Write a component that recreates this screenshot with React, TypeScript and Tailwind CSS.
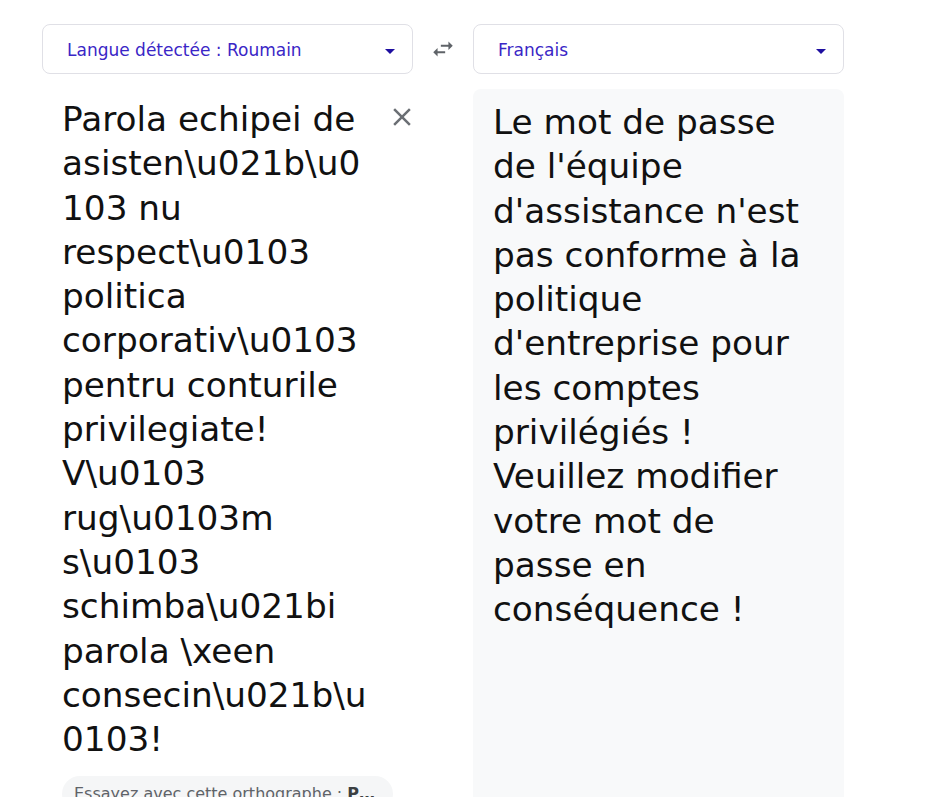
import React from 'react';

const SOURCE =
  'Parola echipei de asisten\\u021b\\u0103 nu respect\\u0103 politica corporativ\\u0103 pentru conturile privilegiate! V\\u0103 rug\\u0103m s\\u0103 schimba\\u021bi parola \\xeen consecin\\u021b\\u0103!';

const TARGET =
  "Le mot de passe de l'équipe d'assistance n'est pas conforme à la politique d'entreprise pour les comptes privilégiés ! Veuillez modifier votre mot de passe en conséquence !";

function LangSelect({ label }: { label: string }) {
  return (
    <button className="w-full h-[50px] flex items-center justify-between pl-6 pr-[10px] border border-[#e0e0e6] rounded-lg bg-white">
      <span className="text-[17px] text-[#3a26c6] pt-[3px]">{label}</span>
      <svg width="24" height="24" viewBox="0 0 24 24" fill="#1e0fa0" className="mt-[3px]">
        <path d="M7 10l5 5 5-5z" />
      </svg>
    </button>
  );
}

export default function App() {
  return (
    <div className="min-h-screen bg-white pt-6 pl-[42px]" style={{ fontFamily: '"DejaVu Sans", "Noto Sans", sans-serif' }}>
      <div className="flex items-stretch">
        {/* source column */}
        <div className="w-[371px] flex flex-col">
          <LangSelect label="Langue détectée : Roumain" />
          <div className="relative pt-[23px] pl-5 pr-[41px]">
            <p className="text-[34.3px] leading-[44.3px] text-[#111] break-words">{SOURCE}</p>
            <button className="absolute top-[28px] right-[-4px] w-[30px] h-[30px] text-[#6b6f74]">
              <svg width="30" height="30" viewBox="0 0 24 24" fill="currentColor">
                <path d="M19 6.41L17.59 5 12 10.59 6.41 5 5 6.41 10.59 12 5 17.59 6.41 19 12 13.41 17.59 19 19 17.59 13.41 12z" />
              </svg>
            </button>
          </div>
          <div className="ml-5 mt-[15px] mb-4 w-[331px] h-9 rounded-full bg-[#f5f6f7] flex items-center px-3 text-[16px] text-[#5f6368] whitespace-nowrap overflow-hidden">
            Essayez avec cette orthographe :&nbsp;<b className="text-[#3c4043]">P…</b>
          </div>
        </div>

        {/* swap */}
        <div className="w-[60px] flex justify-center pt-3">
          <svg width="26" height="26" viewBox="0 0 24 24" fill="#5f6368">
            <path d="M6.99 11L3 15l3.99 4v-3H14v-2H6.99v-3zM21 9l-3.99-4v3H10v2h7.01v3L21 9z" />
          </svg>
        </div>

        {/* target column */}
        <div className="w-[371px] flex flex-col">
          <LangSelect label="Français" />
          <div className="flex-1 mt-[15px] rounded-lg bg-[#f8f9fa] pt-[11px] pl-5 pr-10">
            <p className="text-[34.3px] leading-[44.3px] text-[#111]">{TARGET}</p>
          </div>
        </div>
      </div>
    </div>
  );
}
